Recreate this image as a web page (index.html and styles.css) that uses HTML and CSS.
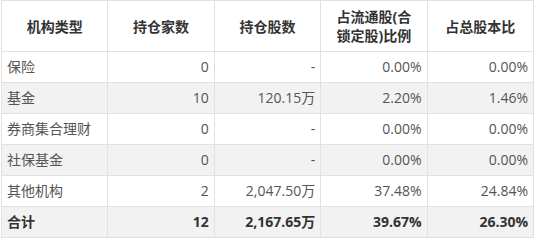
FILE: index.html
```html
<!DOCTYPE html>
<html lang="zh-CN">
<head>
  <meta charset="UTF-8">
  <title>机构持仓</title>
  <link rel="stylesheet" href="styles.css">
</head>
<body>
  <table class="holdings">
    <thead>
      <tr>
        <th>机构类型</th>
        <th>持仓家数</th>
        <th>持仓股数</th>
        <th>占流通股(合<br>锁定股)比例</th>
        <th>占总股本比</th>
      </tr>
    </thead>
    <tbody>
      <tr>
        <td>保险</td>
        <td class="num">0</td>
        <td class="num">-</td>
        <td class="num">0.00%</td>
        <td class="num">0.00%</td>
      </tr>
      <tr>
        <td>基金</td>
        <td class="num">10</td>
        <td class="num">120.15万</td>
        <td class="num">2.20%</td>
        <td class="num">1.46%</td>
      </tr>
      <tr>
        <td>券商集合理财</td>
        <td class="num">0</td>
        <td class="num">-</td>
        <td class="num">0.00%</td>
        <td class="num">0.00%</td>
      </tr>
      <tr>
        <td>社保基金</td>
        <td class="num">0</td>
        <td class="num">-</td>
        <td class="num">0.00%</td>
        <td class="num">0.00%</td>
      </tr>
      <tr>
        <td>其他机构</td>
        <td class="num">2</td>
        <td class="num">2,047.50万</td>
        <td class="num">37.48%</td>
        <td class="num">24.84%</td>
      </tr>
      <tr class="total">
        <td>合计</td>
        <td class="num">12</td>
        <td class="num">2,167.65万</td>
        <td class="num">39.67%</td>
        <td class="num">26.30%</td>
      </tr>
    </tbody>
  </table>
</body>
</html>
```

FILE: styles.css
```css
body {
  margin: 0;
  padding: 0 0 0 1px;
  background: #fff;
  font-family: "Open Sans", "Noto Sans CJK SC", sans-serif;
  font-size: 14px;
  color: #555;
}
.holdings {
  width: 533px;
  border-collapse: collapse;
  table-layout: fixed;
}
.holdings th,
.holdings td {
  border: 1px solid #e1e1e1;
  padding: 0 5px;
}
.holdings th {
  height: 50px;
  line-height: 19px;
  font-weight: bold;
  color: #333;
  text-align: center;
}
.holdings td {
  height: 30px;
  line-height: 30px;
  text-align: left;
  white-space: nowrap;
}
.holdings td.num {
  text-align: right;
}
.holdings tbody tr:nth-child(even) {
  background: #f2f2f2;
}
.holdings tr.total td {
  font-weight: bold;
  color: #333;
}
```
